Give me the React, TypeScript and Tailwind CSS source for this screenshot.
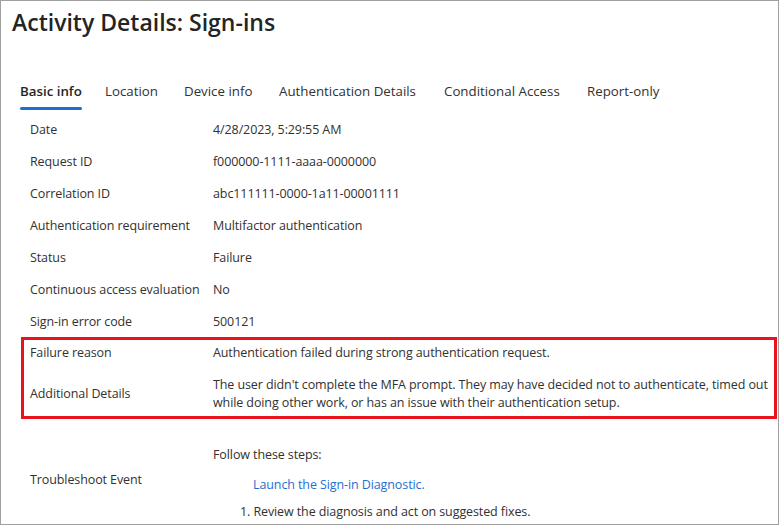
import React from "react";

const rows: [string, string][] = [
  ["Date", "4/28/2023, 5:29:55 AM"],
  ["Request ID", "f000000-1111-aaaa-0000000"],
  ["Correlation ID", "abc111111-0000-1a11-00001111"],
  ["Authentication requirement", "Multifactor authentication"],
  ["Status", "Failure"],
  ["Continuous access evaluation", "No"],
  ["Sign-in error code", "500121"],
];

const tabs: { label: string; w: string; active?: boolean }[] = [
  { label: "Basic info", w: "w-[85px]", active: true },
  { label: "Location", w: "w-[79px]" },
  { label: "Device info", w: "w-[95px]" },
  { label: "Authentication Details", w: "w-[165px]" },
  { label: "Conditional Access", w: "w-[143px]" },
  { label: "Report-only", w: "w-[100px]" },
];

export default function App() {
  return (
    <div
      className="w-[780px] h-[527px] bg-white text-[#323130]"
      style={{ fontFamily: '"Open Sans", "Noto Sans", sans-serif' }}
    >
      <div className="w-[779px] h-[525px] border border-[#a0a0a0] flex flex-col overflow-hidden">
        <div className="pl-[11px] pt-[5px] h-[74px]">
          <h1 className="text-[23px] leading-[32px] font-semibold text-[#242424]">
            Activity Details: Sign-ins
          </h1>
        </div>
        <div className="flex pl-[19px] h-[34px]">
          {tabs.map((t) => (
            <div key={t.label} className={`${t.w} shrink-0`}>
              <div className="inline-flex flex-col">
                <span
                  className={`text-[13.3px] leading-[32px] whitespace-nowrap ${
                    t.active ? "font-semibold text-[#242424]" : "text-[#323130]"
                  }`}
                >
                  {t.label}
                </span>
                {t.active && <span className="h-[3px] bg-[#1f6fd0] rounded-sm" />}
              </div>
            </div>
          ))}
        </div>
        <div className="pt-[5px] text-[12.5px] tracking-[-0.1px]">
          {rows.map(([k, v]) => (
            <div key={k} className="flex h-[32px] items-center pl-[29px]">
              <div className="w-[183px] shrink-0 whitespace-nowrap">{k}</div>
              <div className="whitespace-nowrap">{v}</div>
            </div>
          ))}
          <div className="ml-[20px] -mt-[1px] w-[756px] h-[82px] border-[3px] border-[#e8131c] pl-[6px] flex flex-col">
            <div className="flex h-[27px] items-center">
              <div className="w-[183px] shrink-0">Failure reason</div>
              <div className="whitespace-nowrap">
                Authentication failed during strong authentication request.
              </div>
            </div>
            <div className="flex h-[36px] mt-[9px] items-center">
              <div className="w-[183px] shrink-0">Additional Details</div>
              <div className="leading-[18px] whitespace-nowrap">
                <div>
                  The user didn't complete the MFA prompt. They may have decided not to
                  authenticate, timed out
                </div>
                <div>while doing other work, or has an issue with their authentication setup.</div>
              </div>
            </div>
          </div>
          <div className="flex items-start pl-[29px] mt-[27px]">
            <div className="w-[183px] shrink-0 pt-[25px] leading-[18px]">Troubleshoot Event</div>
            <div className="flex flex-col">
              <div className="leading-[18px]">Follow these steps:</div>
              <div className="leading-[18px] mt-[12px] pl-[40px] text-[#1f6fd0]">
                Launch the Sign-in Diagnostic.
              </div>
              <div className="leading-[18px] mt-[9px] pl-[27px]">
                1. Review the diagnosis and act on suggested fixes.
              </div>
            </div>
          </div>
        </div>
      </div>
    </div>
  );
}
